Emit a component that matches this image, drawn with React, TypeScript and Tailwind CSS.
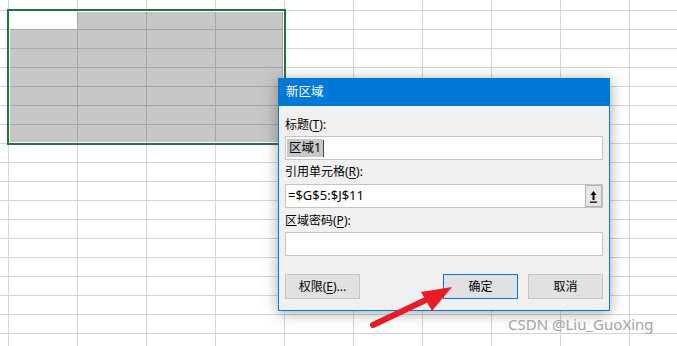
import React from "react";

const COLS = 10;
const ROWS = 19;

function Sheet() {
  const rows = [];
  for (let r = 0; r < ROWS; r++) {
    const cells = [];
    for (let c = 0; c < COLS + 1; c++) {
      cells.push(
        <div
          key={c}
          className={`shrink-0 border-r border-b border-[#d4d4d4] ${c === 0 ? "w-[9px]" : "w-[69px]"} ${r === 0 ? "h-[11px]" : "h-[19px]"}`}
        />
      );
    }
    rows.push(
      <div key={r} className="flex">
        {cells}
      </div>
    );
  }
  return <div className="flex flex-col">{rows}</div>;
}

function Selection() {
  const cells = [];
  for (let i = 0; i < 28; i++) {
    cells.push(<div key={i} className={i === 0 ? "bg-white" : "bg-[#c6c6c6]"} />);
  }
  return (
    <div className="absolute left-[7px] top-[9px] w-[279px] h-[136px] border-2 border-[#217346] bg-white p-px">
      <div className="grid h-full w-full gap-px bg-[#a6a6a6] grid-cols-[67px_68px_68px_66px] grid-rows-[17px_18px_18px_18px_18px_18px_17px]">
        {cells}
      </div>
    </div>
  );
}

function Dialog() {
  return (
    <div
      className="absolute left-[278px] top-[78px] w-[332px] h-[233px] border border-[#0078d7] bg-[#f0f0f0] shadow-[0_2px_14px_rgba(0,0,0,0.35)] flex flex-col text-[12px] text-black"
      style={{ fontFamily: '"Noto Sans", "Noto Sans CJK SC", sans-serif' }}
    >
      <div className="h-[27px] bg-[#0078d7] text-white flex items-center pl-[7px] text-[12.5px]">新区域</div>
      <div className="flex flex-col px-[6px]">
        <div className="mt-[11px] leading-[16px] h-[16px]">
          标题(<span className="underline underline-offset-2">T</span>):
        </div>
        <div className="mt-[3px] h-[24px] border border-[#c4c4c4] bg-white flex items-center pl-[1px]">
          <span className="bg-[#c8c8c8] px-[2px] leading-[18px] text-[12.5px]">区域1</span>
          <span className="w-px h-[17px] bg-[#444]" />
        </div>
        <div className="mt-[4px] leading-[16px] h-[16px]">
          引用单元格(<span className="underline underline-offset-2">R</span>):
        </div>
        <div className="mt-[4px] h-[24px] border border-[#c4c4c4] bg-white flex items-center">
          <span className="flex-1 pl-[2px] text-[13px]">=$G$5:$J$11</span>
          <div className="w-[17px] h-[22px] bg-[#e6e6e6] border border-[#b4b4b4] flex items-center justify-center">
            <svg width="9" height="15" viewBox="0 0 9 15">
              <path d="M4.5 2 L1.5 6 H3.5 V11 H5.5 V6 H7.5 Z" fill="#000" />
              <rect x="1" y="12.5" width="7" height="1.3" fill="#000" />
            </svg>
          </div>
        </div>
        <div className="mt-[5px] leading-[16px] h-[16px]">
          区域密码(<span className="underline underline-offset-2">P</span>):
        </div>
        <div className="mt-[3px] h-[24px] border border-[#c4c4c4] bg-white" />
        <div className="mt-[18px] flex">
          <div className="w-[75px] h-[25px] bg-[#e1e1e1] border border-[#c4c4c4] flex items-center justify-center">
            权限(<span className="underline underline-offset-2">E</span>)...
          </div>
          <div className="ml-auto w-[75px] h-[25px] bg-[#e1e1e1] border border-[#0078d7] flex items-center justify-center">
            确定
          </div>
          <div className="ml-[10px] w-[75px] h-[25px] bg-[#e1e1e1] border border-[#c4c4c4] flex items-center justify-center">
            取消
          </div>
        </div>
      </div>
    </div>
  );
}

function Arrow() {
  return (
    <svg className="absolute left-0 top-0" width="677" height="346" viewBox="0 0 677 346">
      <line x1="373" y1="325" x2="432" y2="297" stroke="#e81c24" strokeWidth="6" strokeLinecap="round" />
      <polygon points="452,287 421,292 432,311" fill="#e81c24" />
    </svg>
  );
}

export default function App() {
  return (
    <div className="relative w-[677px] h-[346px] overflow-hidden bg-white">
      <Sheet />
      <Selection />
      <Dialog />
      <Arrow />
      <div
        className="absolute left-[508px] top-[314px] text-[15px] leading-[20px] text-[#a3a3a3]"
        style={{ fontFamily: '"Noto Sans", sans-serif' }}
      >
        CSDN @Liu_GuoXing
      </div>
    </div>
  );
}
